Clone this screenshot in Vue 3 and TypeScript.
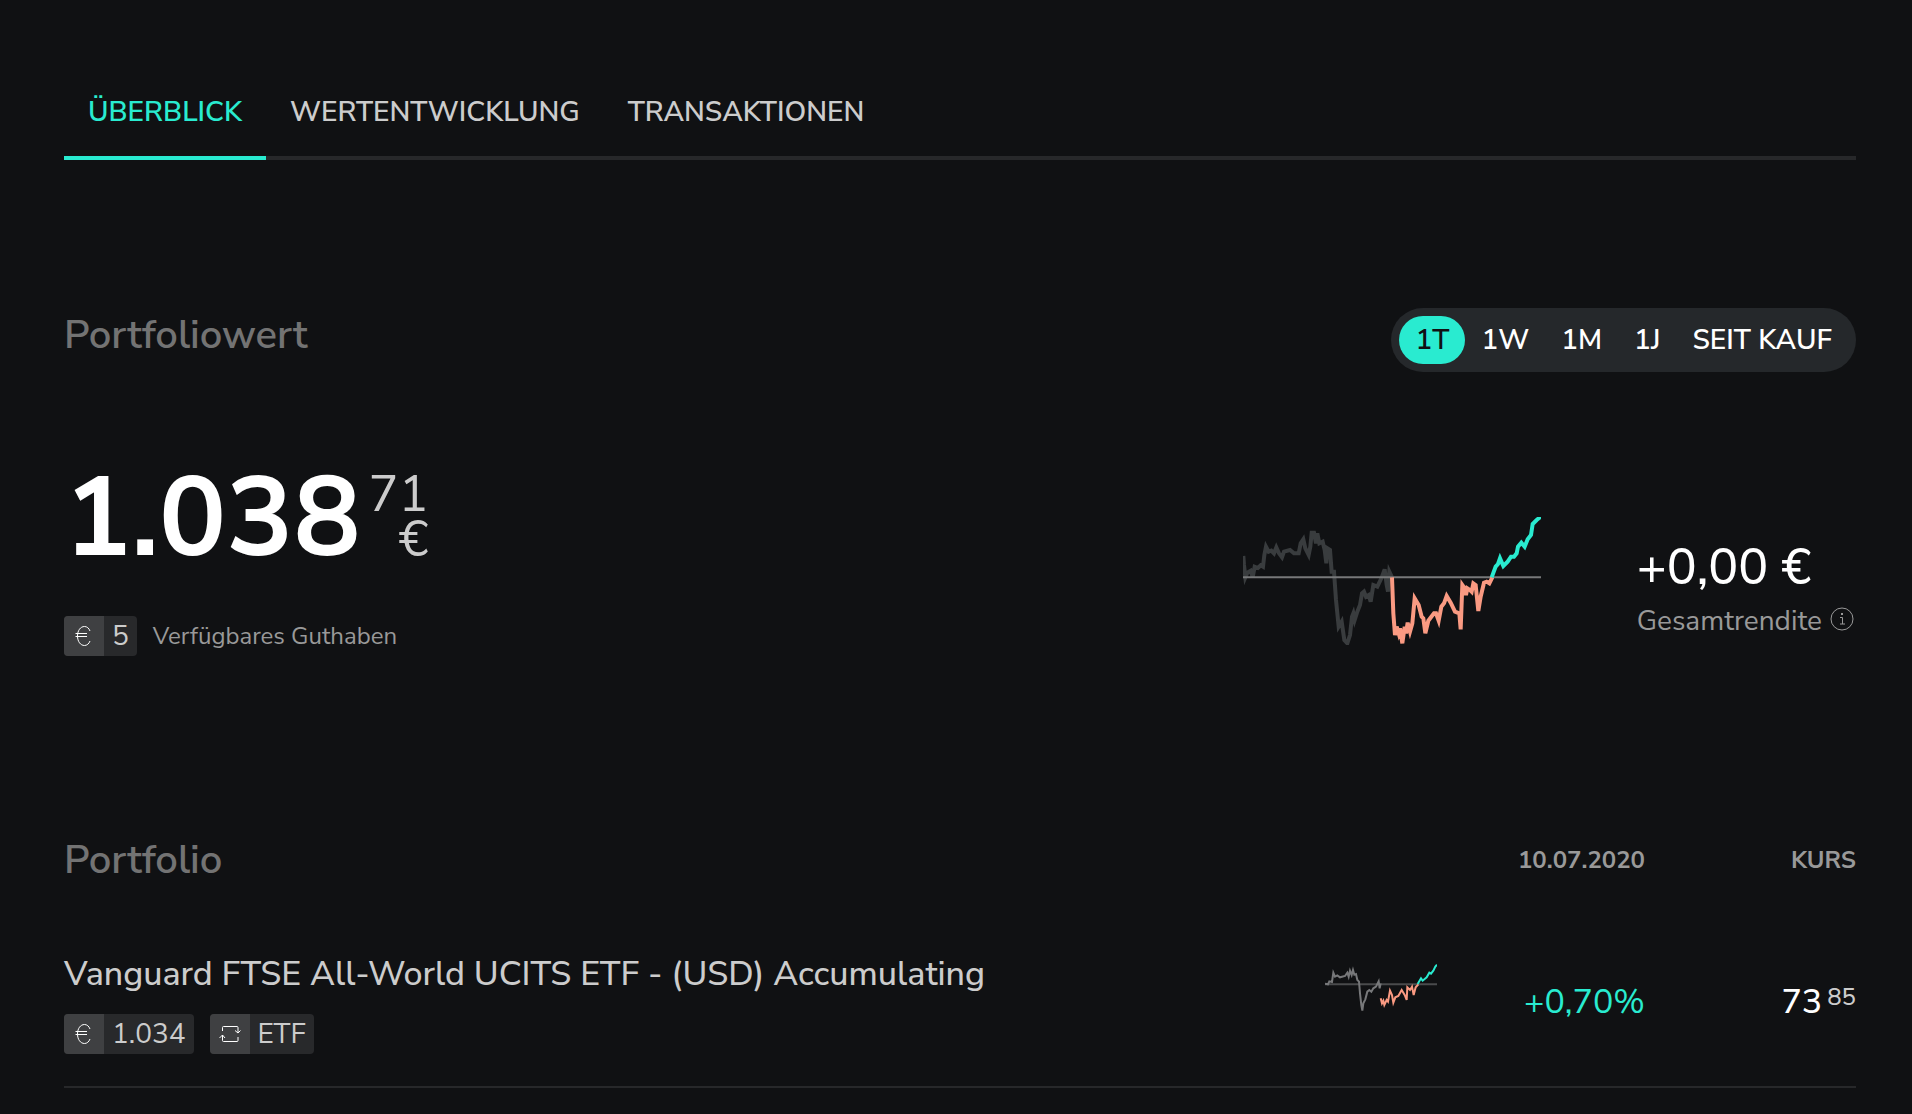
<script setup lang="ts">
import { ref } from 'vue'

const tabs: string[] = ['Überblick', 'Wertentwicklung', 'Transaktionen']
const activeTab = ref<string>('Überblick')

const ranges: string[] = ['1T', '1W', '1M', '1J', 'Seit Kauf']
const activeRange = ref<string>('1T')

const chart = {
  before:
    'M40 168 42 195 46 232 52 218 62 212 68 232 74 200 84 204 92 196 99 200 103 165 108 140 116 155 124 152 132 160 139 142 147 160 156 172 162 155 180 150 192 160 206 160 212 130 220 118 226 145 236 165 241 140 245 98 252 98 258 130 262 100 268 130 278 125 284 150 289 190 292 145 300 150 305 215 312 215 318 300 326 380 335 365 343 420 352 430 360 405 366 350 370 340 374 360 382 335 390 315 396 280 402 275 408 290 416 285 422 305 430 255 442 260 454 235 464 208 470 255 474 275 478 215 486 232',
  below:
    'M486 232 490 340 495 405 500 380 506 400 510 385 517 430 524 380 528 400 533 368 540 395 547 370 554 295 566 315 575 350 580 355 586 400 595 362 612 340 618 340 626 362 634 320 642 310 650 288 662 308 675 335 688 340 692 388 697 255 702 262 708 285 712 265 720 270 725 275 730 250 737 255 745 333 752 290 762 248 770 245 778 250 787 232',
  above:
    'M785 232 797 200 804 192 810 175 820 198 833 185 843 170 852 170 860 160 864 140 874 128 884 140 893 118 903 105 908 72 920 60 932 50',
}

const spark = {
  before:
    'M45 131 54 133 58 124 66 126 70 98 75 110 82 106 90 112 105 108 112 98 116 110 120 92 125 105 129 90 133 104 138 102 142 120 147 125 150 160 154 195 157 212 160 190 166 178 172 155 178 150 184 155 190 145 198 140 206 124 209 145 212 130',
  below:
    'M212 175 216 190 220 182 223 195 230 180 234 185 240 152 246 165 250 188 256 172 265 168 275 150 284 165 290 180 292 142 300 150 306 140 311 165 317 142 325 133',
  above: 'M323 132 333 115 338 122 350 112 358 98 363 101 370 92 376 80 381 74',
}
</script>

<template>
  <main class="page">
    <nav class="tabs">
      <button
        v-for="tab in tabs"
        :key="tab"
        type="button"
        class="tab"
        :class="{ active: tab === activeTab }"
        @click="activeTab = tab"
      >
        {{ tab }}
      </button>
    </nav>

    <section class="value">
      <header class="value-head">
        <h2 class="heading">Portfoliowert</h2>
        <div class="ranges">
          <button
            v-for="range in ranges"
            :key="range"
            type="button"
            class="range"
            :class="{ active: range === activeRange }"
            :aria-pressed="range === activeRange"
            @click="activeRange = range"
          >
            {{ range }}
          </button>
        </div>
      </header>

      <div class="value-body">
        <div>
          <div class="amount">
            <span class="whole">1.038</span>
            <span class="fraction"><span>71</span><span>€</span></span>
          </div>
          <div class="balance">
            <span class="badge">
              <span class="badge-icon">
                <svg width="18" height="20" viewBox="0 0 18 20" aria-hidden="true">
                  <path d="M15 5C14 2.300 12 .5 9.500.5 5.500.5 2.500 4.500 2.500 10s3 9.500 7 9.500c2.500 0 4.500-1.800 5.500-4.500M.5 7.500h11.500M.5 10.500h11.500" />
                </svg>
              </span>
              <span class="badge-text">5</span>
            </span>
            <span class="balance-label">Verfügbares Guthaben</span>
          </div>
        </div>

        <div class="performance">
          <svg class="chart" width="298" height="128" viewBox="39 51 894 384" aria-hidden="true">
            <path class="before" :d="chart.before" />
            <path class="axis" d="M39 231.500H933" />
            <path class="below" :d="chart.below" />
            <path class="above" :d="chart.above" />
          </svg>
          <div class="return">
            <span class="return-value">+0,00 €</span>
            <span class="return-label">
              Gesamtrendite
              <svg width="24" height="24" viewBox="0 0 24 24" aria-hidden="true">
                <circle cx="12" cy="12" r="11" />
                <path class="stem" d="M10 10.500h2.500V17M10 17h5" />
                <path class="dot" d="M11 6h2v2h-2z" />
              </svg>
            </span>
          </div>
        </div>
      </div>
    </section>

    <table class="portfolio">
      <thead>
        <tr>
          <th scope="col" class="col-name"><span class="heading">Portfolio</span></th>
          <th scope="col" class="col-spark" aria-label="Verlauf"></th>
          <th scope="col" class="col-change">10.07.2020</th>
          <th scope="col" class="col-price">KURS</th>
        </tr>
      </thead>
      <tbody>
        <tr>
          <td>
            <a href="#" class="name">Vanguard FTSE All-World UCITS ETF - (USD) Accumulating</a>
            <div class="badges">
              <span class="badge">
                <span class="badge-icon">
                  <svg width="18" height="20" viewBox="0 0 18 20" aria-hidden="true">
                    <path d="M15 5C14 2.300 12 .5 9.500.5 5.500.5 2.500 4.500 2.500 10s3 9.500 7 9.500c2.500 0 4.500-1.800 5.500-4.500M.5 7.500h11.500M.5 10.500h11.500" />
                  </svg>
                </span>
                <span class="badge-text">1.034</span>
              </span>
              <span class="badge">
                <span class="badge-icon">
                  <svg width="22" height="18" viewBox="0 0 22 18" aria-hidden="true">
                    <path d="M3.500 6V2.500q0-1 1-1h13.500q1 0 1 1V8M16 5.500l3 2.500 2.500-2.500M19 12v3.500q0 1-1 1H4.500q-1 0-1-1V10M.5 13l3-3L6 13" />
                  </svg>
                </span>
                <span class="badge-text">ETF</span>
              </span>
            </div>
          </td>
          <td class="col-spark">
            <svg class="spark" width="112" height="48" viewBox="45 72 336 144" aria-hidden="true">
              <path class="axis" d="M45 133H381" />
              <path class="before" :d="spark.before" />
              <path class="below" :d="spark.below" />
              <path class="above" :d="spark.above" />
            </svg>
          </td>
          <td class="col-change">+0,70%</td>
          <td class="col-price">
            <span class="price"><span>73</span><span class="cents">85</span></span>
          </td>
        </tr>
      </tbody>
    </table>
  </main>
</template>

<style>
body {
  margin: 0;
  background: #101113;
}
</style>

<style scoped>
.page {
  box-sizing: border-box;
  padding: 64px 56px 0 64px;
  font-family: "Nunito Sans", Nunito, Lato, "Open Sans", sans-serif;
  color: #fff;
}

button {
  border: 0;
  background: none;
  font: inherit;
  cursor: pointer;
}

svg {
  display: block;
  fill: none;
}

.tabs {
  display: flex;
  box-shadow: inset 0 -4px #27282a;
}

.tab {
  height: 96px;
  padding: 8px 24px 4px;
  border-bottom: 4px solid transparent;
  color: #ccc;
  font-size: 28px;
  font-weight: 600;
  line-height: 36px;
  text-transform: uppercase;
}

.tab.active {
  border-color: #29ebd0;
  color: #29ebd0;
}

.value {
  margin-top: 148px;
}

.value-head {
  display: flex;
  justify-content: space-between;
}

.heading {
  margin: 0;
  padding-top: 4px;
  color: #737373;
  font-size: 40px;
  font-weight: 600;
  line-height: 46px;
}

.ranges {
  display: flex;
  padding: 8px;
  border-radius: 32px;
  background: #25282b;
}

.range {
  height: 48px;
  padding: 0 16px;
  border-radius: 24px;
  color: #fff;
  font-size: 28px;
  font-weight: 600;
  line-height: 44px;
  text-transform: uppercase;
}

.range.active {
  background: #29ebd0;
  color: #101113;
}

.value-body {
  display: flex;
  justify-content: space-between;
  margin-top: 92px;
}

.amount {
  display: flex;
  gap: 8px;
}

.whole {
  font-size: 112px;
  font-weight: 700;
  line-height: 110px;
}

.fraction {
  display: flex;
  flex-direction: column;
  align-items: flex-end;
  padding-top: 8px;
  color: #ccc;
  font-size: 50px;
  font-weight: 400;
  line-height: 45px;
}

.balance {
  display: flex;
  align-items: center;
  gap: 16px;
  margin-top: 42px;
}

.balance-label {
  color: #999;
  font-size: 24px;
  line-height: 32px;
}

.badge {
  display: flex;
  height: 40px;
  overflow: hidden;
  border-radius: 4px;
  background: #28292b;
}

.badge-icon {
  display: flex;
  align-items: center;
  justify-content: center;
  width: 40px;
  background: #3f4042;
}

.badge-icon path {
  stroke: #fff;
  stroke-width: 1;
}

.badge-text {
  padding: 0 8px;
  color: #ccc;
  font-size: 28px;
  line-height: 40px;
}

.performance {
  display: flex;
  align-items: flex-start;
  gap: 96px;
  padding-top: 53px;
}

.chart path {
  stroke-width: 12;
}

.chart .before {
  stroke: #393c3e;
}

.chart .axis {
  stroke: #77787a;
  stroke-width: 6;
}

.chart .below,
.spark .below {
  stroke: #fa9a82;
}

.chart .above,
.spark .above {
  stroke: #29ebd0;
}

.return {
  display: flex;
  flex-direction: column;
  padding: 24px 2px 0 0;
}

.return-value {
  font-size: 50px;
  font-weight: 500;
  line-height: 54px;
}

.return-label {
  display: flex;
  align-items: center;
  gap: 8px;
  margin-top: 4px;
  color: #999;
  font-size: 28px;
  line-height: 44px;
}

.return-label svg {
  margin-bottom: 4px;
}

.return-label circle,
.return-label .stem {
  stroke: #999;
}

.return-label .dot {
  fill: #999;
}

.portfolio {
  width: 100%;
  margin-top: 176px;
  border-collapse: collapse;
}

.portfolio th,
.portfolio td {
  padding: 0;
  text-align: left;
  vertical-align: middle;
}

.portfolio thead th {
  height: 56px;
  color: #999;
  font-size: 24px;
  font-weight: 700;
}

.portfolio tbody td {
  padding: 62px 0 32px;
  border-bottom: 2px solid #27282a;
  font-size: 34px;
}

.portfolio .col-spark {
  width: 112px;
}

.portfolio td.col-spark {
  vertical-align: top;
}

.portfolio .col-change {
  width: 208px;
  text-align: right;
}

.portfolio td.col-change {
  color: #29ebd0;
}

.portfolio .col-price {
  width: 211px;
  text-align: right;
}

.name {
  display: block;
  color: #ccc;
  font-size: 34px;
  font-weight: 500;
  line-height: 48px;
  text-decoration: none;
}

.badges {
  display: flex;
  gap: 16px;
  margin-top: 16px;
}

.spark {
  margin-top: 14px;
}

.spark path {
  stroke-width: 6;
}

.spark .axis {
  stroke: #4a4b4d;
}

.spark .before {
  stroke: #77787a;
}

.price {
  display: flex;
  align-items: flex-start;
  justify-content: flex-end;
  gap: 5px;
  font-weight: 500;
  line-height: 40px;
}

.cents {
  color: #ccc;
  font-size: 24px;
  line-height: 30px;
}
</style>
